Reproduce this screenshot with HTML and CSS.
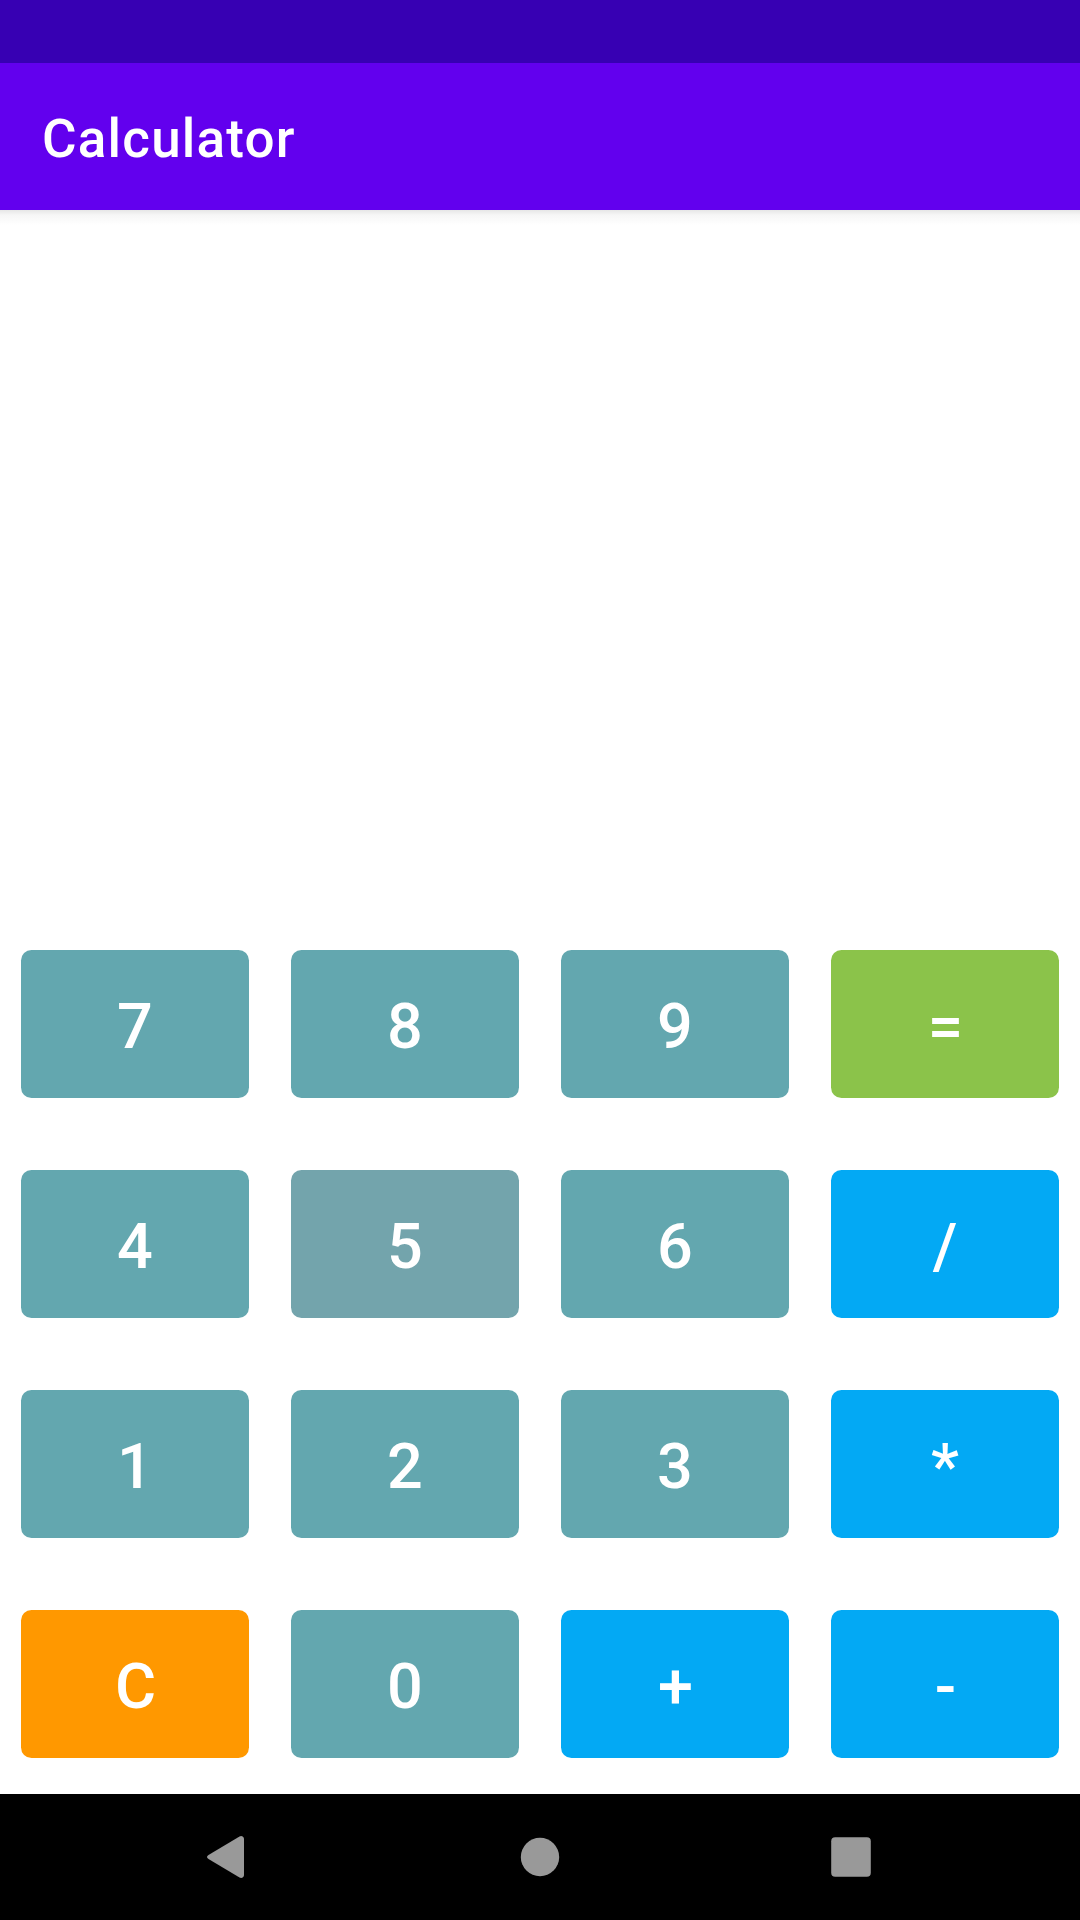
FILE: index.html
```html
<!DOCTYPE html>
<html lang="en">
<head>
<meta charset="utf-8">
<title>Calculator</title>
<link rel="stylesheet" href="styles.css">
</head>
<body>
<div class="status-bar"></div>
<header class="app-bar"><h1>Calculator</h1></header>
<main class="calculator">
  <div class="display"></div>
  <div class="keypad">
    <button class="key">7</button><button class="key">8</button><button class="key">9</button><button class="key equals wide">=</button>
    <button class="key">4</button><button class="key focused">5</button><button class="key">6</button><button class="key operator">/</button>
    <button class="key">1</button><button class="key">2</button><button class="key">3</button><button class="key operator">*</button>
    <button class="key clear wide">C</button><button class="key">0</button><button class="key operator wide">+</button><button class="key operator wide">-</button>
  </div>
</main>
<nav class="nav-bar">
  <svg viewBox="0 0 1080 126" width="1080" height="126" fill="#999">
    <path d="M208.500 61L239.500 42.400Q241.500 41.400 243 42.800Q244 43.800 244 45V81Q244 82.200 243 83.200Q241.500 84.600 239.500 83.600L208.500 65Q207 64 207 63Q207 62 208.500 61Z"/>
    <circle cx="540" cy="63" r="19.200"/>
    <rect x="831.200" y="43.200" width="39.600" height="39.600" rx="4"/>
  </svg>
</nav>
</body>
</html>
```
FILE: styles.css
```css
* { box-sizing: border-box; }
body {
  margin: 0;
  width: 1080px;
  height: 1920px;
  display: flex;
  flex-direction: column;
  background: #fff;
  font-family: Roboto, sans-serif;
  overflow: hidden;
}
.status-bar { height: 63px; background: #3700b3; }
.app-bar {
  height: 147px;
  padding: 5px 42px 0;
  display: flex;
  align-items: center;
  background: #6200ee;
}
h1 {
  margin: 0;
  color: #fff;
  font-size: 53px;
  font-weight: 500;
  letter-spacing: 1.2px;
}
.calculator {
  flex: 1;
  display: flex;
  flex-direction: column;
  background: linear-gradient(#e6e6e6, #f6f6f6 5px, #fff 15px);
}
.display { flex: 1; }
.keypad {
  display: grid;
  grid-template-columns: repeat(4, 228px);
  grid-auto-rows: 148px;
  gap: 72px 42px;
  padding: 0 21px 36px;
}
.key {
  border: 0;
  border-radius: 10.5px;
  padding: 4px 0 0;
  background: #63a7af;
  color: #fff;
  font: 500 63px Roboto, sans-serif;
}
.wide { padding-left: 1px; }
.focused { background: #73a4ac; }
.equals { background: #8bc34a; }
.operator { background: #03a9f4; }
.clear { background: #ff9800; }
.nav-bar { height: 126px; background: #000; }
.nav-bar svg { display: block; }
```
